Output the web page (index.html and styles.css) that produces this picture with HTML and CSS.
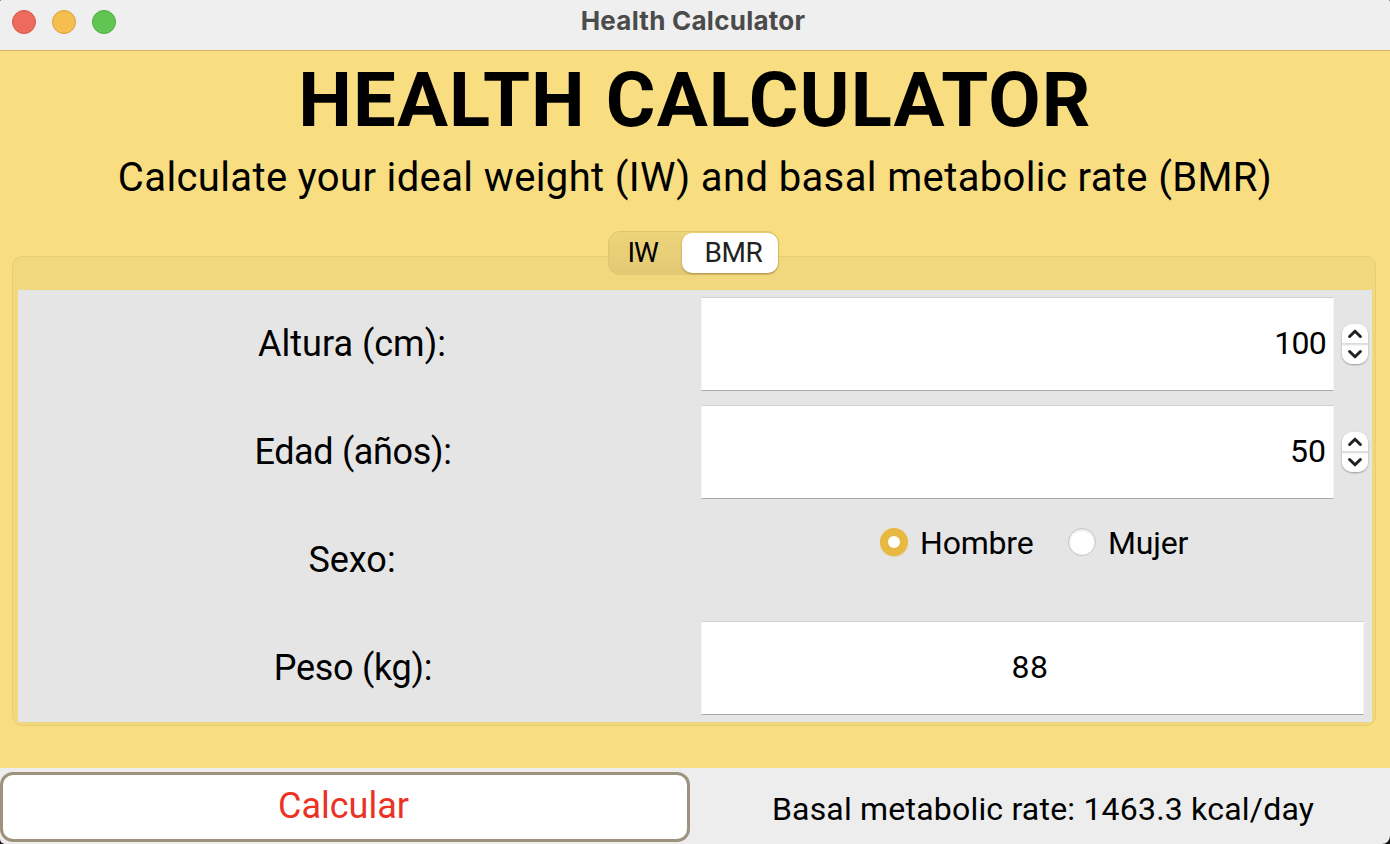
FILE: index.html
```html
<!DOCTYPE html>
<html lang="es">
<head>
<meta charset="utf-8">
<title>Health Calculator</title>
<link rel="stylesheet" href="styles.css">
</head>
<body>
<div class="window">
  <header class="titlebar">
    <div class="lights"><i class="light red"></i><i class="light amber"></i><i class="light green"></i></div>
    <span class="window-title">Health Calculator</span>
  </header>
  <main class="content">
    <h1 class="heading"><span>HEALTH CALCULATOR</span></h1>
    <p class="subtitle"><span>Calculate your ideal weight (IW) and basal metabolic rate (BMR)</span></p>
    <section class="panel">
      <div class="tabs"><span class="tab">IW</span><span class="tab active">BMR</span></div>
      <div class="form">
        <label class="label altura"><span>Altura (cm):</span></label>
        <div class="control">
          <div class="field number"><span class="n100">100</span></div>
          <div class="stepper">
            <svg viewBox="0 0 26 40"><path d="M7.6 12.5 13 7.2l5.4 5.3M7.6 27.5l5.4 5.3 5.4-5.3"/></svg>
          </div>
        </div>
        <label class="label edad"><span>Edad (años):</span></label>
        <div class="control">
          <div class="field number"><span class="n50">50</span></div>
          <div class="stepper">
            <svg viewBox="0 0 26 40"><path d="M7.6 12.5 13 7.2l5.4 5.3M7.6 27.5l5.4 5.3 5.4-5.3"/></svg>
          </div>
        </div>
        <label class="label sexo"><span>Sexo:</span></label>
        <div class="control radios">
          <i class="radio checked"></i><span class="option hombre">Hombre</span>
          <i class="radio"></i><span class="option mujer">Mujer</span>
        </div>
        <label class="label peso"><span>Peso (kg):</span></label>
        <div class="control">
          <div class="field weight"><span>88</span></div>
        </div>
      </div>
    </section>
  </main>
  <footer class="footer">
    <div class="button"><span>Calcular</span></div>
    <div class="result"><span>Basal metabolic rate: 1463.3 kcal/day</span></div>
  </footer>
</div>
</body>
</html>
```
FILE: styles.css
```css
* { box-sizing: border-box; }
body {
  margin: 0;
  background: #111;
  color: #000;
  font-family: Roboto, "Liberation Sans", sans-serif;
  white-space: nowrap;
}
.window {
  display: flex;
  flex-direction: column;
  width: 1390px;
  height: 844px;
  overflow: hidden;
  border-radius: 2px 2px 8px 5px;
  background: #ededed;
}
.titlebar {
  display: grid;
  grid-template-columns: 1fr auto 1fr;
  height: 51px;
  padding: 0 16px 0 12px;
  background: #efefef;
  border-bottom: 1px solid #d3b75f;
}
.lights { display: flex; gap: 16px; padding-top: 10px; }
.light { width: 24px; height: 24px; border-radius: 50%; border: 1px solid; }
.red { background: #ed6a5e; border-color: #d95448; }
.amber { background: #f5bf4f; border-color: #d8a040; }
.green { background: #61c554; border-color: #4dab3e; }
.window-title {
  font: 700 26px/42px Inter, sans-serif;
  letter-spacing: 0.25px;
  color: #4b4b4b;
}
.content {
  display: flex;
  flex-direction: column;
  height: 717px;
  padding: 0 14px 0 12px;
  background: #f8de81;
}
.heading { margin: 0; height: 99px; text-align: center; font-size: 76px; line-height: 98px; font-weight: 700; letter-spacing: 1.1px; padding-left: 2px; }
.subtitle { margin: 0; height: 55px; text-align: center; font-size: 40px; line-height: 55px; letter-spacing: 0.37px; padding-left: 2px; }
.panel {
  margin-top: 51px;
  height: 470px;
  padding: 0 3px 0 5px;
  border: 1px solid #e8cd75;
  border-radius: 10px;
  background: #f1d87e;
}
.tabs {
  display: flex;
  width: 171px;
  height: 44px;
  margin: -26px auto 15px;
  transform: translateX(-2px);
  border: 1px solid #dfc570;
  border-radius: 12px;
  background: linear-gradient(#edd37a, #e2c974);
}
.tab { width: 73px; padding-left: 19px; font-size: 28px; line-height: 42px; letter-spacing: -1px; }
.tab.active {
  width: 96px;
  height: 40px;
  margin-top: 1px;
  padding-left: 23px;
  line-height: 40px;
  letter-spacing: -0.5px;
  color: #222;
  border-radius: 10px;
  background: #fff;
  box-shadow: 0 1px 2px #806b2899;
}
.form {
  display: grid;
  grid-template-columns: 668px 670px;
  grid-template-rows: repeat(4, 108px);
  column-gap: 15px;
  height: 432px;
  overflow: hidden;
  background: #e5e5e5;
}
.label { text-align: center; font-size: 36px; line-height: 109px; }
.edad { letter-spacing: -0.35px; padding-left: 2px; }
.peso { letter-spacing: -0.3px; padding-left: 2px; }
.control { display: flex; align-items: flex-start; padding-top: 7px; }
.field {
  height: 94px;
  border: 1px solid #d0d0d0;
  border-color: #d0d0d0 #f4f4f4 #aaa #f4f4f4;
  background: #fff;
  font-size: 32px;
  line-height: 91px;
}
.number { width: 633px; padding-right: 7px; text-align: right; }
.n100 { letter-spacing: -0.7px; }
.weight { width: 663px; padding-right: 5px; text-align: center; letter-spacing: 0.5px; }
.stepper {
  width: 26px;
  height: 40px;
  margin: 27px 0 0 8px;
  border-radius: 10px;
  background: linear-gradient(#fff 19px, #d8d8d8 19px, #e8e8e8 21px, #fff 22px);
  box-shadow: 0 1px 2px #0005;
}
.stepper svg { display: block; width: 26px; height: 40px; fill: none; stroke: #222; stroke-width: 3; stroke-linecap: round; stroke-linejoin: round; }
.radios { padding: 22px 0 0 179px; }
.radio {
  width: 28px;
  height: 28px;
  flex: none;
  border-radius: 50%;
  border: 1px solid #c4c4c4;
  background: #fff;
  box-shadow: inset 0 1px 3px #0002;
}
.radio.checked { border: 8px solid #e8b942; box-shadow: 0 1px 1px #e8b94266; }
.option { font-size: 32px; line-height: 30px; padding-left: 12px; letter-spacing: -0.2px; }
.hombre { width: 160px; }
.footer { display: flex; height: 76px; padding: 4px 0 2px; }
.button {
  width: 690px;
  height: 70px;
  padding-right: 3px;
  border: 3px solid #9d927c;
  border-radius: 13px;
  background: #fff;
  color: #eb3323;
  text-align: center;
  font-size: 36px;
  line-height: 63px;
}
.result { width: 690px; margin-left: 8px; text-align: center; font-size: 32px; line-height: 74px; letter-spacing: 0.2px; }
```
